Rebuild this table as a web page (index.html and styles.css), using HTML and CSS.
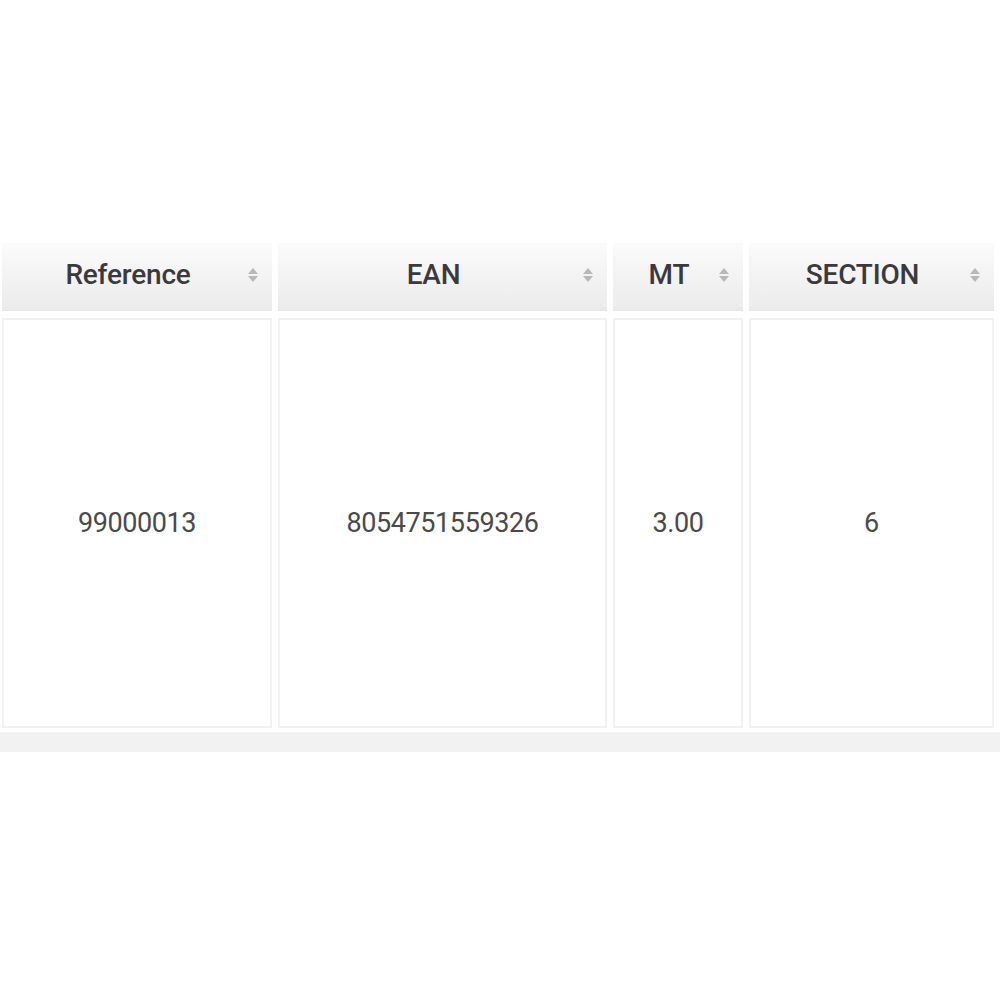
FILE: index.html
```html
<!DOCTYPE html>
<html lang="en">
<head>
  <meta charset="UTF-8">
  <title>Products</title>
  <link rel="stylesheet" href="styles.css">
</head>
<body>
  <div class="table-wrap">
    <div class="grid">
      <div class="th">Reference<span class="sort"></span></div>
      <div class="th">EAN<span class="sort"></span></div>
      <div class="th">MT<span class="sort"></span></div>
      <div class="th">SECTION<span class="sort"></span></div>

      <div class="td">99000013</div>
      <div class="td">8054751559326</div>
      <div class="td">3.00</div>
      <div class="td">6</div>
    </div>
    <div class="footer-strip"></div>
  </div>
</body>
</html>
```

FILE: styles.css
```css
* {
  margin: 0;
  padding: 0;
  box-sizing: border-box;
}

body {
  background: #ffffff;
  font-family: Roboto, "Liberation Sans", sans-serif;
  color: #3d3d3d;
}

.table-wrap {
  padding-top: 243px;
}

.grid {
  display: grid;
  grid-template-columns: 270px 329px 130px 245px;
  grid-template-rows: 68px 410px;
  column-gap: 6px;
  row-gap: 7px;
  margin-left: 2px;
}

.th {
  position: relative;
  display: flex;
  align-items: center;
  justify-content: center;
  padding: 0 18px 5px 0;
  font-size: 28px;
  font-weight: 500;
  letter-spacing: -0.2px;
  color: #3a3a3c;
  background: linear-gradient(to bottom, #fbfbfb, #ebebeb);
  border-bottom: 1px solid #e6e6e6;
}

.sort {
  position: absolute;
  right: 14px;
  top: 50%;
  width: 10px;
  height: 14px;
  margin-top: -9px;
}

.sort::before,
.sort::after {
  content: "";
  position: absolute;
  left: 0;
  border-left: 5px solid transparent;
  border-right: 5px solid transparent;
}

.sort::before {
  top: 0;
  border-bottom: 6px solid #b8b8b8;
}

.sort::after {
  bottom: 0;
  border-top: 6px solid #b8b8b8;
}

.td {
  display: flex;
  align-items: center;
  justify-content: center;
  font-size: 27px;
  color: #4a4a4a;
  letter-spacing: -0.4px;
  background: #ffffff;
  border: 2px solid #f1f1f1;
}

.footer-strip {
  height: 20px;
  margin-top: 4px;
  background: #f2f2f2;
}
```
